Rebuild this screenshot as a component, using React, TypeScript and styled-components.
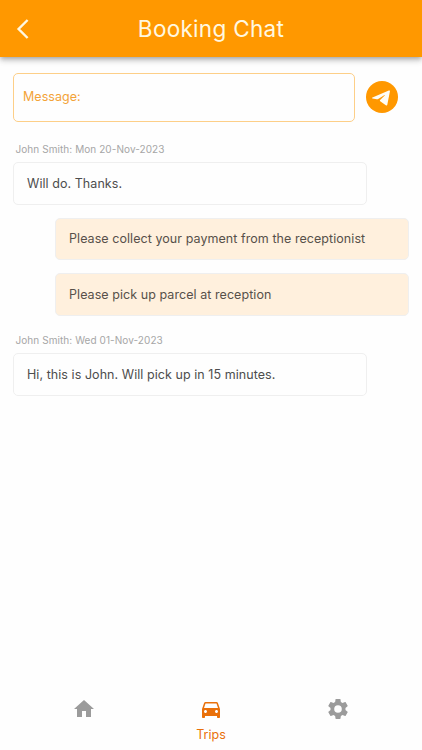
import React from "react";
import styled, { createGlobalStyle } from "styled-components";
import { MdHome, MdDirectionsCar } from "react-icons/md";

const GlobalStyle = createGlobalStyle`
  * { box-sizing: border-box; }
  body { margin: 0; background: #fefefe; font-family: Inter, "Liberation Sans", sans-serif; }
  button { border: 0; padding: 0; background: none; font: inherit; cursor: pointer; }
`;

const Screen = styled.div`
  display: flex;
  flex-direction: column;
  height: 750px;
  overflow: hidden;
`;

const Header = styled.header`
  display: grid;
  grid-template-columns: 46px 1fr 46px;
  align-items: center;
  flex: none;
  height: 57px;
  background: #ff9800;
  box-shadow: 0 2px 4px -1px rgba(0, 0, 0, 0.2), 0 4px 5px rgba(0, 0, 0, 0.14),
    0 1px 10px rgba(0, 0, 0, 0.1);
`;

const BackButton = styled.button`
  display: flex;
  justify-content: center;
  color: #fff8e1;
`;

const Title = styled.h1`
  margin: 0;
  text-align: center;
  color: #fff8e1;
  font-size: 22.5px;
  font-weight: 400;
  line-height: 28px;
  letter-spacing: 0.3px;
`;

const Content = styled.main`
  flex: 1;
  padding: 15.5px 13px 0;
`;

const Composer = styled.form`
  display: flex;
  align-items: center;
  gap: 11px;
  margin-bottom: 20.8px;
`;

const MessageField = styled.input`
  width: 342px;
  height: 49px;
  padding: 0 9px 1px;
  border: 1px solid #fdcf88;
  border-radius: 5px;
  outline: 0;
  background: #fefefe;
  color: #f0a030;
  font: 400 12.5px Inter, sans-serif;
  letter-spacing: 0.05px;
  &::placeholder { color: #f3a338; opacity: 1; }
`;

const SendButton = styled.button`
  display: flex;
  width: 32px;
  height: 32px;
`;

const Stamp = styled.div`
  height: 20px;
  padding-left: 2.5px;
  color: #a6a6a6;
  font-size: 10px;
  line-height: 15px;
  letter-spacing: 0.07px;
`;

const Bubble = styled.div<{ $own?: boolean }>`
  display: flex;
  align-items: center;
  width: 354px;
  height: 42.4px;
  margin: 0 0 13.1px ${({ $own }) => ($own ? "42px" : "0")};
  padding: 0 13px;
  border: 1px solid #efefef;
  border-radius: 5px;
  background: ${({ $own }) => ($own ? "#fff0dd" : "#fefefe")};
  color: ${({ $own }) => ($own ? "#57504a" : "#4d4d4d")};
  font-size: 12.5px;
  letter-spacing: 0.06px;
  white-space: nowrap;
`;

const Group = styled.section`
  margin-bottom: 17.8px;
`;

const TabBar = styled.nav`
  display: grid;
  grid-template-columns: repeat(3, 126.6px);
  justify-content: center;
  height: 56px;
  flex: none;
`;

const Tab = styled.button<{ $active?: boolean }>`
  display: flex;
  flex-direction: column;
  align-items: center;
  gap: 6px;
  padding-top: 3px;
  color: ${({ $active }) => ($active ? "#e9700a" : "#9b9b9b")};
`;

const TabLabel = styled.span`
  font-size: 12.5px;
  line-height: 16px;
`;

type Message = { text: string; own?: boolean };

const groups: { stamp: string; messages: Message[] }[] = [
  {
    stamp: "John Smith: Mon 20-Nov-2023",
    messages: [
      { text: "Will do. Thanks." },
      { text: "Please collect your payment from the receptionist", own: true },
      { text: "Please pick up parcel at reception", own: true },
    ],
  },
  {
    stamp: "John Smith: Wed 01-Nov-2023",
    messages: [{ text: "Hi, this is John. Will pick up in 15 minutes." }],
  },
];

const BackIcon = () => (
  <svg width="14" height="20" viewBox="0 0 14 20" fill="none">
    <path d="M11.6 1 2.6 10l9 9" stroke="currentColor" strokeWidth="2.4" />
  </svg>
);

const SendIcon = () => (
  <svg width="32" height="32" viewBox="0 0 32 32">
    <circle cx="16" cy="16" r="16" fill="#ff9800" />
    <path
      d="M6.5 16.6 22.8 9.6c.8-.3 1.3.1 1.1.9L21.3 23.8c-.2.9-.8 1-1.5.5l-5.6-4.1c-.5-.4-.5-.8-.1-1.2l4.6-4.5c.3-.4 0-.6-.5-.3l-6 3.8c-.5.4-.9.4-1.5.2L6.6 17.600c-.9-.3-.8-.7-.1-1Z"
      fill="#fffdf5"
    />
  </svg>
);

const GearIcon = () => (
  <svg width="24" height="24" viewBox="0 0 24 24" fill="currentColor">
    <path d="M19.430 12.980c.04-.32.07-.64.07-.98s-.03-.66-.07-.98l2.110-1.650c.19-.15.24-.42.12-.64l-2-3.460c-.12-.22-.39-.3-.61-.22l-2.490 1c-.52-.4-1.080-.73-1.690-.98l-.38-2.650C14.460 2.180 14.250 2 14 2h-4c-.25 0-.46.18-.49.42l-.38 2.650c-.61.25-1.170.59-1.690.98l-2.490-1c-.23-.09-.49 0-.61.22l-2 3.460c-.13.22-.07.49.12.64l2.110 1.650c-.04.32-.07.65-.07.98s.03.66.07.98l-2.110 1.650c-.19.15-.24.42-.12.64l2 3.460c.12.22.39.3.61.22l2.490-1c.52.4 1.080.73 1.690.98l.38 2.650c.03.24.24.42.49.42h4c.25 0 .46-.18.49-.42l.38-2.650c.61-.25 1.170-.59 1.690-.98l2.490 1c.23.09.49 0 .61-.22l2-3.460c.12-.22.07-.49-.12-.64l-2.110-1.650zM12 15.800A3.800 3.800 0 1 1 12 8.200a3.800 3.800 0 0 1 0 7.600z" />
  </svg>
);

export default function App() {
  return (
    <Screen>
      <GlobalStyle />
      <Header>
        <BackButton aria-label="Back"><BackIcon /></BackButton>
        <Title>Booking Chat</Title>
      </Header>
      <Content>
        <Composer onSubmit={(e) => e.preventDefault()}>
          <MessageField placeholder="Message:" />
          <SendButton aria-label="Send"><SendIcon /></SendButton>
        </Composer>
        {groups.map((group) => (
          <Group key={group.stamp}>
            <Stamp>{group.stamp}</Stamp>
            {group.messages.map((message) => (
              <Bubble key={message.text} $own={message.own}>{message.text}</Bubble>
            ))}
          </Group>
        ))}
      </Content>
      <TabBar>
        <Tab aria-label="Home"><MdHome size={24} /></Tab>
        <Tab $active>
          <MdDirectionsCar size={24} />
          <TabLabel>Trips</TabLabel>
        </Tab>
        <Tab aria-label="Settings"><GearIcon /></Tab>
      </TabBar>
    </Screen>
  );
}
